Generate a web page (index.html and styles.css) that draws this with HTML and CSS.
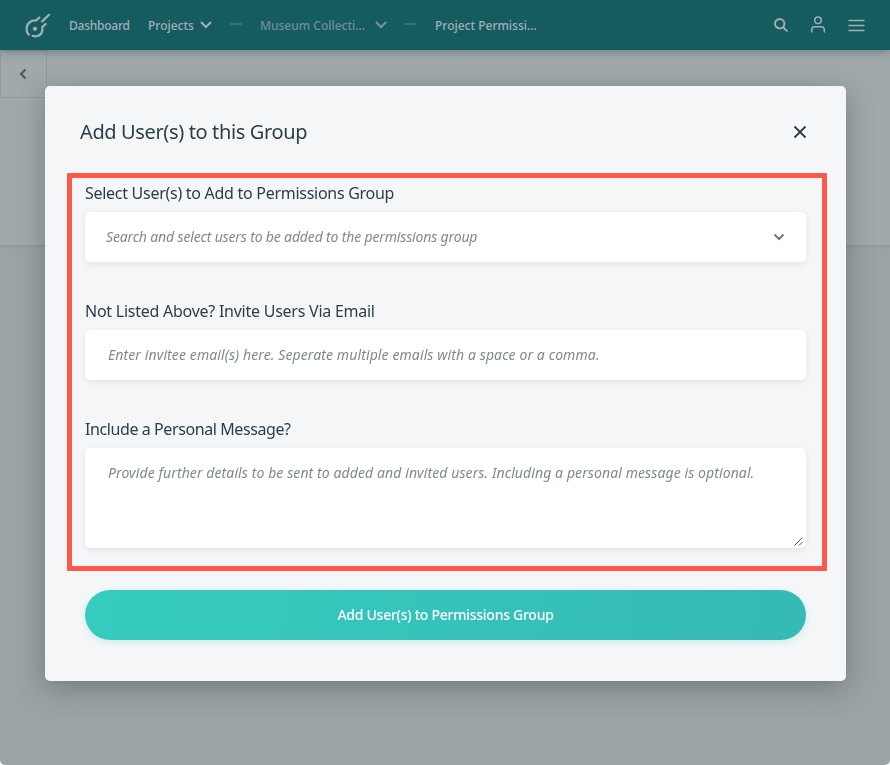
FILE: index.html
```html
<!DOCTYPE html>
<html lang="en">
<head>
<meta charset="utf-8">
<title>Project Permissions</title>
<link rel="stylesheet" href="styles.css">
</head>
<body>
<div class="page">
  <header class="topbar">
    <svg class="logo" width="27" height="27" viewBox="0 0 27 27" fill="none" stroke="currentColor" stroke-width="2.2" stroke-linecap="round">
      <path d="M25 1.700 18.200 8.400M15.300 4.600 12 7.500C6.500 7 2.600 10.700 2.600 16c0 2.400.8 4.300 2.200 5.800M21.600 11 18.300 14.200c.9 4.700-1.500 9-6.500 9.100-1.300 0-2.300-.1-3.200-.5"/>
      <circle cx="11" cy="15.800" r="2.100" fill="currentColor" stroke="none"/>
    </svg>
    <nav class="crumbs">
      <a class="crumb dash">Dashboard</a>
      <a class="crumb projects">Projects</a>
      <svg class="chev" width="12" height="8" viewBox="0 0 12 8"><path d="M1.500 1.500 6 6l4.500-4.500"/></svg>
      <i class="sep"></i>
      <a class="crumb museum">Museum Collecti…</a>
      <svg class="chev dim" width="12" height="8" viewBox="0 0 12 8"><path d="M1.500 1.500 6 6l4.500-4.500"/></svg>
      <i class="sep second"></i>
      <a class="crumb current">Project Permissi…</a>
    </nav>
    <div class="tools">
      <svg width="14" height="14" viewBox="0 0 14 14" fill="none" stroke="currentColor" stroke-width="1.900" stroke-linecap="round"><circle cx="5.700" cy="5.700" r="4.700"/><path d="m9.300 9.300 3.500 3.500"/></svg>
      <svg class="user" width="16" height="17" viewBox="0 0 16 17" fill="none" stroke="currentColor" stroke-width="1.500"><circle cx="8" cy="4.200" r="3.300"/><path d="M1.700 16.500v-2.300c0-2 1.300-3.400 3.300-3.400h6c2 0 3.300 1.400 3.300 3.400v2.300"/></svg>
      <svg width="17" height="13" viewBox="0 0 17 13" fill="none" stroke="currentColor" stroke-width="1.500"><path d="M.5 1.500h16M.5 6.500h16M.5 11.500h16"/></svg>
    </div>
  </header>
  <section class="band">
    <div class="back"><svg width="8" height="12" viewBox="0 0 8 12" fill="none" stroke="currentColor" stroke-width="2.200"><path d="M6.500 1.500 2 6l4.500 4.500"/></svg></div>
  </section>
</div>
<div class="overlay">
  <main class="modal">
    <div class="head">
      <h1>Add User(s) to this Group</h1>
      <svg width="14" height="14" viewBox="0 0 14 14" fill="none" stroke="currentColor" stroke-width="1.900"><path d="m1.500 1.500 11 11m0-11-11 11"/></svg>
    </div>
    <div class="form">
      <div class="field">
        <label class="l1">Select User(s) to Add to Permissions Group</label>
        <div class="box select"><span class="p1">Search and select users to be added to the permissions group</span>
          <svg class="arrow" width="12" height="8" viewBox="0 0 12 8"><path d="M1.500 1.500 6 6l4.500-4.500"/></svg></div>
      </div>
      <div class="field">
        <label class="l2">Not Listed Above? Invite Users Via Email</label>
        <div class="box"><span class="p2">Enter invitee email(s) here. Seperate multiple emails with a space or a comma.</span></div>
      </div>
      <div class="field">
        <label class="l3">Include a Personal Message?</label>
        <div class="box area"><span class="p3">Provide further details to be sent to added and invited users. Including a personal message is optional.</span>
          <svg class="grip" width="9" height="9" viewBox="0 0 9 9"><path d="M.5 8.500l8-8M5 8.500 8.500 5"/></svg></div>
      </div>
    </div>
    <button class="submit">Add User(s) to Permissions Group</button>
  </main>
</div>
</body>
</html>
```
FILE: styles.css
```css
* { box-sizing: border-box; }
html { background: #fff; }
body { margin: 0; background: #fff; font-family: "Noto Sans", sans-serif; overflow: hidden; }
svg { display: block; flex: none; }
.page { height: 765px; background: #9ba3a5; border-radius: 0 0 5px 5px; }
.topbar { position: relative; height: 50px; display: flex; align-items: center; padding: 0 25px 0 24px; background: #155c61; color: #a3b0b3; box-shadow: 0 1px 10px rgba(40, 60, 65, .45); }
.logo { margin-top: 2px; }
.crumbs { display: flex; align-items: center; margin-left: 18px; font-size: 12px; font-weight: 500; line-height: 20px; white-space: nowrap; }
.crumb { margin-top: 2px; }
.dash { width: 60px; letter-spacing: -.25px; }
.projects { width: 47px; margin-left: 19px; }
.museum { width: 105px; margin-left: 18px; color: #6f9094; }
.current { margin-left: 18px; }
.chev { margin-left: 5px; fill: none; stroke: currentColor; stroke-width: 2; stroke-linecap: round; }
.dim { margin-left: 10px; color: #75979a; }
.sep { width: 12px; height: 2px; margin: -3px 0 0 18px; background: #1d7c7e; }
.sep.second { margin-left: 18px; }
.tools { display: flex; align-items: center; gap: 22px; margin-left: auto; }
.user { margin-top: -2px; }
.band { height: 195px; background: #a1a9ab; box-shadow: 0 1px 3px rgba(60, 75, 80, .15); }
.back { width: 47px; height: 48px; display: flex; align-items: center; justify-content: center; padding-right: 2px; border: 1px solid #929c9f; color: #4d5c63; }
.overlay { position: fixed; inset: 0; padding: 85.500px 44px 0 45px; }
.modal { height: 595px; padding: 26px 19px 0 22px; background: #f4f6f8; border-radius: 5px; box-shadow: 0 6px 28px rgba(50, 65, 70, .42); color: #2a3f4a; }
.head { display: flex; align-items: center; justify-content: space-between; height: 40px; padding: 0 20px 0 13px; }
h1 { margin: 0; font-size: 20px; font-weight: 400; line-height: 40px; letter-spacing: -.37px; white-space: nowrap; }
.form { margin-top: 21.500px; height: 398px; border: 5px solid #ff594a; padding: 0 16px 0 13px; }
.field { margin-bottom: 34px; }
label { display: block; height: 30px; margin-bottom: 4px; font-size: 16px; line-height: 30px; white-space: nowrap; }
.l1 { letter-spacing: -.28px; }
.l2 { letter-spacing: -.25px; }
.l3 { letter-spacing: -.41px; }
.box { display: flex; align-items: center; position: relative; height: 50px; padding: 0 22px 2px 23px; background: #fff; border-radius: 5px; box-shadow: 0 2px 6px rgba(50, 70, 80, .09); color: #7e898e; font-size: 14px; font-style: italic; white-space: nowrap; }
.select { justify-content: space-between; padding-left: 21px; padding-right: 21px; }
.p1 { letter-spacing: -.155px; }
.p2 { letter-spacing: .108px; }
.p3 { letter-spacing: .096px; }
.area { height: 100px; align-items: flex-start; padding-top: 15px; }
.arrow { margin-top: 2px; fill: none; stroke: #6e7b82; stroke-width: 2; }
.grip { position: absolute; right: 3px; bottom: 2px; fill: none; stroke: #555; stroke-width: 1; }
.submit { display: block; width: 721px; height: 50px; margin: 19px 0 0 18px; padding: 0; border: 0; border-radius: 25px; background: linear-gradient(100deg, #36cbbf, #35bab6); box-shadow: 0 2px 6px rgba(53, 190, 183, .2); color: #fff; font: 500 14px/50px "Noto Sans", sans-serif; letter-spacing: -.26px; }
```
